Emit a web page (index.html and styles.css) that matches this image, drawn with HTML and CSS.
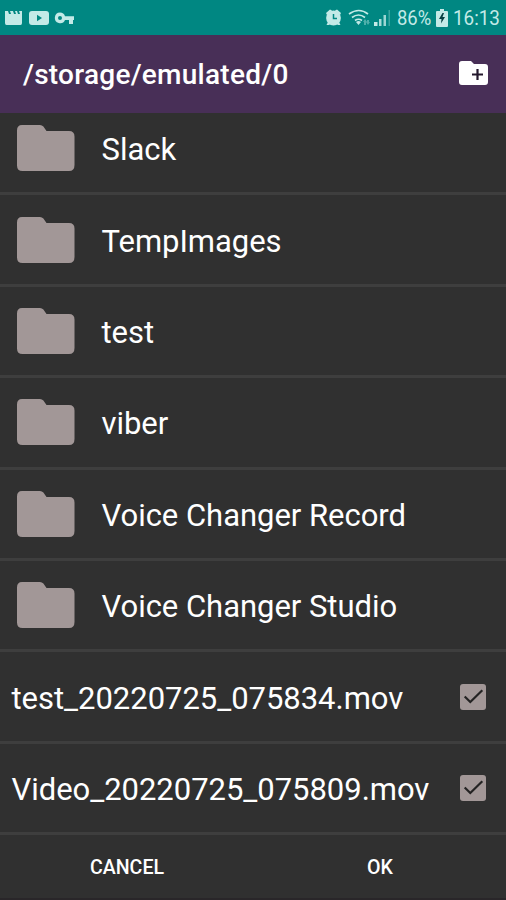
FILE: index.html
```
<!DOCTYPE html>
<html lang="en">
<head>
<meta charset="utf-8">
<title>File picker</title>
<link rel="stylesheet" href="styles.css">
</head>
<body>
<svg class="defs" aria-hidden="true">
  <symbol id="folder" viewBox="0 0 58 46"><path d="M5 0H23Q25 0 26.400 1.600L29.500 6H52Q57.500 6 57.500 11.500V40Q57.500 46 52 46H5.500Q0 46 0 40.500V5.500Q0 0 5 0Z"/></symbol>
  <symbol id="checkbox" viewBox="0 0 26 26"><rect width="26" height="26" rx="3" fill="#a29797"/><path d="M4.700 12.500 10.300 18 22.300 6.300" fill="none" stroke="#242323" stroke-width="2.200"/></symbol>
</svg>
<div class="screen">
  <header class="status">
    <svg class="status-left" width="76" height="18" viewBox="0 0 76 18">
      <path d="M0 2 3 2 4 5H6L5 2H8L9 5H11L10 2H12L13 5H15L14 2H17V14Q17 16 15.500 16H1.500Q0 16 0 14Z"/>
      <rect x="24" y="2" width="20" height="14" rx="3"/><path d="M32 5.700v6.600l5-3.300Z" fill="#008782"/>
      <path fill-rule="evenodd" d="M55 3.500a5.300 5.300 0 1 0 5 7.400h4V15h4v-4.100h1V7.200h-9A5.300 5.300 0 0 0 55 3.500Zm0 3.500a2 2 0 1 1 0 4 2 2 0 0 1 0-4Z"/>
    </svg>
    <div class="status-right">
      <svg class="signals" width="67" height="20" viewBox="0 0 67 20">
        <path d="m1 5 4-3.500 2 1L2 7Zm15 0-4-3.500-2 1L15 7ZM3 14l-1.500 3H4l2-1.500ZM14 14l1.500 3H13l-2-1.500Z"/>
        <circle cx="8.500" cy="10" r="7.400"/><path d="M8.500 6v4.500H12" fill="none" stroke="#008782" stroke-width="1.500"/>
        <g fill="none" stroke="#c3eae7" stroke-width="1.700"><path d="M24 6q10-7 19 0M27 9.500q6.500-5 13 0M30 12.500q3.500-2.500 7 0"/></g>
        <path d="m31 14 2.500 3 2.500-3q-2.500-1.800-5 0Z"/>
        <path opacity=".4" d="m38 14 2-3 2 3h-1v3h-2v-3Zm3 0 2 3 2-3h-1v-2h-2v2Z"/>
        <path d="M49 14h3.500v4H49Z"/><path opacity=".85" d="M54 11h2.500v7H54Z"/><path opacity=".8" d="M58.500 7H61v11h-2.500Z"/><path opacity=".3" d="M63.500 2H65v16h-1.500Z"/>
      </svg>
      <span class="percent">86%</span>
      <svg class="battery" width="12" height="18" viewBox="0 0 12 18"><path d="M4 0h4v2h3q1 0 1 1v14q0 1-1 1H1q-1 0-1-1V3q0-1 1-1h3Z"/><path d="M6.500 4 3 10h2.500L5 14.500 9 8H6.500L8 4Z" fill="#063f42"/></svg>
      <span class="clock">16:13</span>
    </div>
  </header>
  <div class="toolbar">
    <h1 class="path">/storage/emulated/0</h1>
    <svg class="new-folder" width="29" height="25" viewBox="0 0 29 25"><path d="M3 0h9l3 3h11q3 0 3 3v15q0 3-3 3H3q-3 0-3-3V3q0-3 3-3Z" fill="#fff"/><path d="M18.500 8v11M13 13.500h11" stroke="#24182d" stroke-width="2.200"/></svg>
  </div>
  <main class="list">
    <div class="rows">
      <div class="row"><svg class="folder"><use href="#folder"/></svg><span class="name">Slack</span></div>
      <div class="row"><svg class="folder"><use href="#folder"/></svg><span class="name">TempImages</span></div>
      <div class="row"><svg class="folder"><use href="#folder"/></svg><span class="name">test</span></div>
      <div class="row"><svg class="folder"><use href="#folder"/></svg><span class="name">viber</span></div>
      <div class="row"><svg class="folder"><use href="#folder"/></svg><span class="name">Voice Changer Record</span></div>
      <div class="row"><svg class="folder"><use href="#folder"/></svg><span class="name">Voice Changer Studio</span></div>
      <div class="row file"><span class="name">test_20220725_075834.mov</span><svg class="check"><use href="#checkbox"/></svg></div>
      <div class="row file"><span class="name">Video_20220725_075809.mov</span><svg class="check"><use href="#checkbox"/></svg></div>
    </div>
  </main>
  <footer class="actions"><span class="action">CANCEL</span><span class="action">OK</span></footer>
</div>
</body>
</html>
```
FILE: styles.css
```
* { box-sizing: border-box; }
body { margin: 0; background: #303030; font-family: Roboto, sans-serif; color: #fff; }
.defs { display: none; }
.screen { width: 506px; height: 900px; display: flex; flex-direction: column; overflow: hidden; }
.status { height: 35px; flex: none; background: #008782; color: #c3eae7; fill: #c3eae7; display: flex; justify-content: space-between; padding: 0 9px 0 5px; }
.status-left { margin-top: 9px; }
.status-right { display: flex; align-items: center; font-size: 20px; white-space: nowrap; padding-top: 1px; }
.signals { margin-right: 5px; }
.percent { width: 35px; margin-right: 4px; font-size: 20.5px; transform: scaleX(.9); transform-origin: left; }
.battery { margin-right: 5px; }
.clock { width: 44px; font-size: 20.5px; transform: scaleX(.92); transform-origin: left; }
.toolbar { height: 78px; flex: none; background: #482f57; display: flex; align-items: center; justify-content: space-between; padding: 0 18px 0 23px; }
.path { margin: 2px 0 0; font-size: 28px; font-weight: 500; line-height: 36px; letter-spacing: .26px; }
.new-folder { margin-top: -1px; }
.list { height: 722px; flex: none; overflow: hidden; }
.rows { margin-top: -9px; }
.row { height: 91.4px; border-bottom: 3px solid #3e3e3e; display: flex; align-items: center; padding-left: 17px; }
.folder { width: 58px; height: 46px; flex: none; fill: #a29797; margin: 0 27px 0 0; }
.name { font-size: 31px; line-height: 40px; white-space: nowrap; margin: 4px 0 0 -.5px; letter-spacing: -.03px; }
.file { justify-content: space-between; padding: 0 20px 0 12px; }
.check { width: 26px; height: 26px; flex: none; margin-top: 1px; }
.actions { flex: 1; display: flex; padding-top: 1px; font-size: 19.6px; font-weight: 500; border-bottom: 2px solid #292629; }
.action { flex: 1; display: flex; align-items: center; justify-content: center; padding-left: 1px; }
```
